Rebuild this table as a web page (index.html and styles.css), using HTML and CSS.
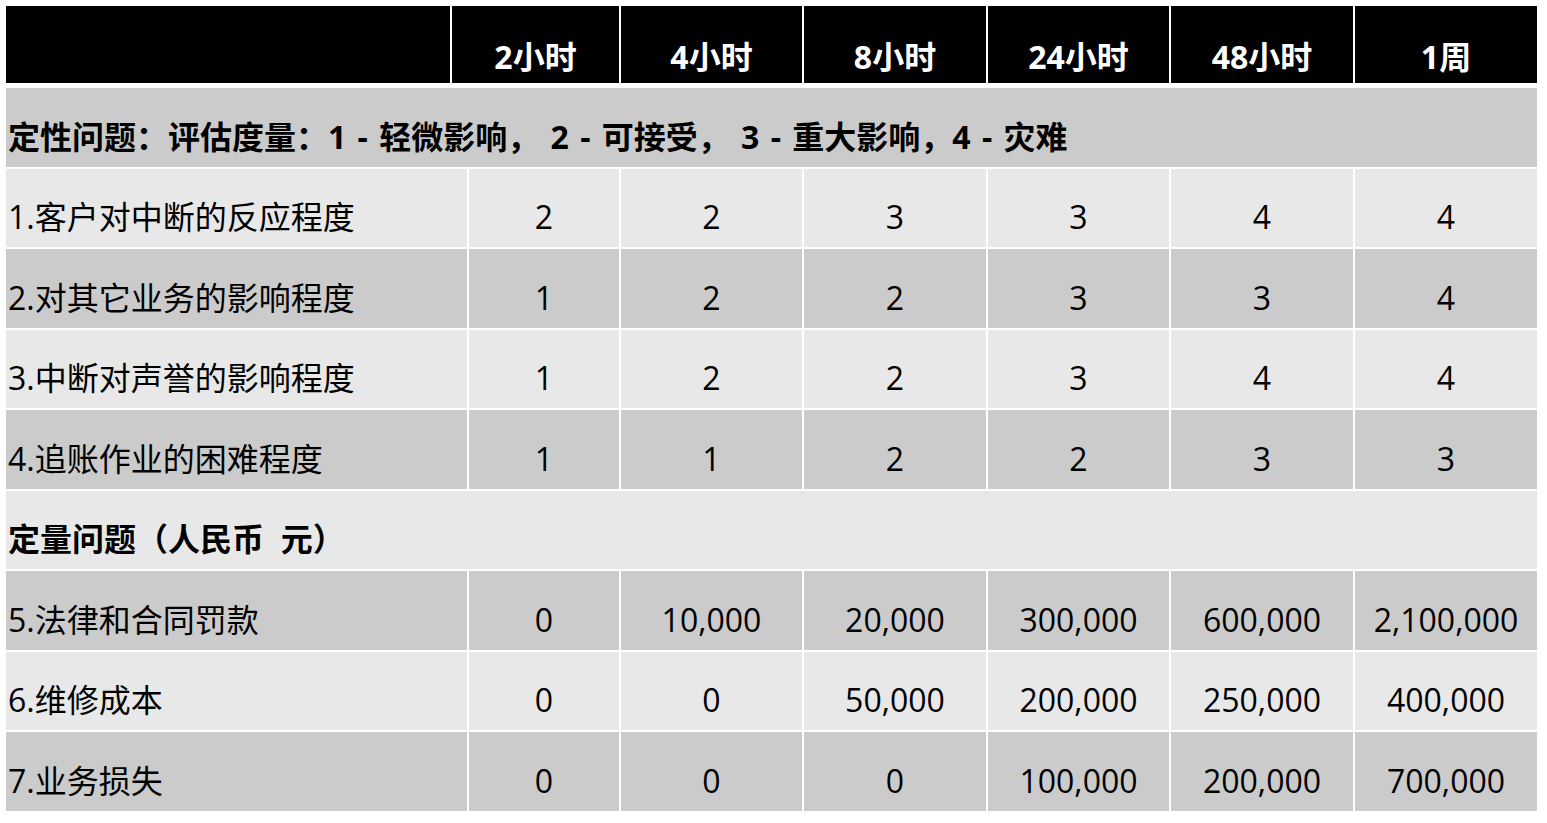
FILE: index.html
```html
<!DOCTYPE html>
<html lang="zh-CN">
<head>
<meta charset="utf-8">
<title>影响评估表</title>
<link rel="stylesheet" href="styles.css">
</head>
<body>
<div class="sheet">
  <div class="row head">
    <div class="cell label"></div>
    <div class="cell">2小时</div>
    <div class="cell">4小时</div>
    <div class="cell">8小时</div>
    <div class="cell">24小时</div>
    <div class="cell">48小时</div>
    <div class="cell">1周</div>
  </div>
  <div class="body">
    <div class="row section dark">
      <div class="cell label scale">定性问题：评估度量：1 - 轻微影响， 2 - 可接受， 3 - 重大影响，4 - 灾难</div>
    </div>
    <div class="row light">
      <div class="cell label">1.客户对中断的反应程度</div>
      <div class="cell">2</div><div class="cell">2</div><div class="cell">3</div><div class="cell">3</div><div class="cell">4</div><div class="cell">4</div>
    </div>
    <div class="row dark">
      <div class="cell label">2.对其它业务的影响程度</div>
      <div class="cell">1</div><div class="cell">2</div><div class="cell">2</div><div class="cell">3</div><div class="cell">3</div><div class="cell">4</div>
    </div>
    <div class="row light">
      <div class="cell label">3.中断对声誉的影响程度</div>
      <div class="cell">1</div><div class="cell">2</div><div class="cell">2</div><div class="cell">3</div><div class="cell">4</div><div class="cell">4</div>
    </div>
    <div class="row dark">
      <div class="cell label">4.追账作业的困难程度</div>
      <div class="cell">1</div><div class="cell">1</div><div class="cell">2</div><div class="cell">2</div><div class="cell">3</div><div class="cell">3</div>
    </div>
    <div class="row section light">
      <div class="cell label">定量问题（人民币  元）</div>
    </div>
    <div class="row dark">
      <div class="cell label">5.法律和合同罚款</div>
      <div class="cell">0</div><div class="cell">10,000</div><div class="cell">20,000</div><div class="cell">300,000</div><div class="cell">600,000</div><div class="cell">2,100,000</div>
    </div>
    <div class="row light">
      <div class="cell label">6.维修成本</div>
      <div class="cell">0</div><div class="cell">0</div><div class="cell">50,000</div><div class="cell">200,000</div><div class="cell">250,000</div><div class="cell">400,000</div>
    </div>
    <div class="row dark">
      <div class="cell label">7.业务损失</div>
      <div class="cell">0</div><div class="cell">0</div><div class="cell">0</div><div class="cell">100,000</div><div class="cell">200,000</div><div class="cell">700,000</div>
    </div>
  </div>
</div>
</body>
</html>
```
FILE: styles.css
```css
html, body {
  margin: 0;
  padding: 0;
  background: #ffffff;
}
body {
  padding: 6px 0 0 6px;
  font-family: "Open Sans", "Noto Sans CJK SC", sans-serif;
  color: #000000;
}
.sheet {
  width: 1531px;
  display: flex;
  flex-direction: column;
  gap: 5px;
}
.body {
  display: flex;
  flex-direction: column;
  gap: 2px;
}
.row {
  display: grid;
  grid-template-columns: 461px 150px 181px 182px 181px 182px 182px;
  column-gap: 2px;
  height: 78.5px;
}
.row.head {
  grid-template-columns: 444px 167px 181px 182px 181px 182px 182px;
  height: 77px;
}
.row.section {
  grid-template-columns: 1fr;
}
.cell {
  display: flex;
  align-items: flex-end;
  justify-content: center;
  font-size: 32px;
  line-height: 40px;
  padding-bottom: 10px;
  white-space: pre;
  box-sizing: border-box;
}
.cell.label {
  justify-content: flex-start;
  padding-left: 2px;
}
.head .cell {
  background: #000000;
  color: #ffffff;
  font-weight: 700;
  padding-bottom: 6px;
}
.dark .cell {
  background: #cbcbcb;
}
.light .cell {
  background: #e8e8e8;
}
.section .cell {
  font-weight: 700;
}
.section .cell.scale {
  word-spacing: 3px;
}
```
